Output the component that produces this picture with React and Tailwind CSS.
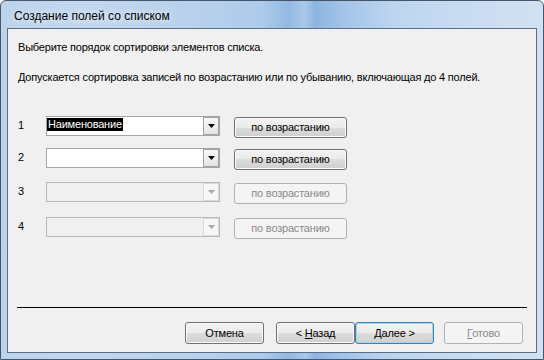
/**
 * Access combo box wizard — sort order step (Windows 7 dialog).
 */

const ui = "font-['Liberation_Sans',Tahoma,sans-serif] text-[11px] leading-[13px] tracking-[-0.2px]";

function Arrow({ disabled }) {
  return (
    <div className={`w-[16px] h-full flex items-center justify-center border ${disabled ? 'border-[#dadada] bg-[#f6f6f6]' : 'border-[#a3a3a3] bg-[linear-gradient(#f7f7f7,#e4e4e4)]'}`}>
      <svg width="7" height="4" viewBox="0 0 7 4"><path d="M0 0h7L3.5 4z" fill={disabled ? '#a8a8a8' : '#000'} /></svg>
    </div>
  );
}

function Combo({ value, disabled }) {
  return (
    <div className={`w-[174px] h-[20px] flex border ${disabled ? 'border-[#b8b8b8] bg-[#f0f0f0]' : 'border-[#a5a5a5] bg-white'}`}>
      <div className="flex-1 pt-px">
        {value && <span className="inline-block bg-black text-white px-px">{value}</span>}
      </div>
      <Arrow disabled={disabled} />
    </div>
  );
}

function Btn({ children, disabled, primary, w = 'w-[79px]', h = 'h-[22px]' }) {
  const look = disabled
    ? 'border-[#adb2b5] bg-[#f4f4f4] text-[#8a8a8a]'
    : primary
      ? 'border-[#3c7fb1] bg-[linear-gradient(#f2f2f2_0%,#ebebeb_50%,#dddddd_50%,#cfcfcf_100%)] shadow-[inset_0_0_0_1px_#9fd7f7] text-black'
      : 'border-[#707070] bg-[linear-gradient(#f2f2f2_0%,#ebebeb_50%,#dddddd_50%,#cfcfcf_100%)] shadow-[inset_0_0_0_1px_#fbfbfb] text-black';
  return (
    <div className={`${w} ${h} shrink-0 rounded-[3px] border flex items-center justify-center ${look}`}>
      <span className="whitespace-pre">{children}</span>
    </div>
  );
}

const rows = [
  { n: 1, mt: 'mt-[32px]', value: 'Наименование' },
  { n: 2, mt: 'mt-[10px]' },
  { n: 3, mt: 'mt-[12px]', disabled: true },
  { n: 4, mt: 'mt-[13px]', disabled: true },
];

export default function App() {
  return (
    <div className="w-[544px] h-[360px] overflow-hidden bg-white">
      <div className="w-full h-full rounded-t-[6px] border border-[#44566b] flex flex-col px-[6px] pb-[6px] bg-[linear-gradient(90deg,#bcd3ec_0%,#c3d8ef_15%,#b9d1ec_35%,#aecbea_48%,#94b9e2_53%,#a9c8e9_56%,#8db4e0_58%,#a3c3e8_63%,#bcd5ef_72%,#c8dcf1_85%,#d2e1f1_100%)]">
        <div className="h-[27px] pl-[7px] pt-[2px] flex items-center font-['Liberation_Sans',sans-serif] text-[12px] text-black [text-shadow:0_0_6px_#ffffff]">
          Создание полей со списком
        </div>
        <div className={`flex-1 border border-[#5b6f86] bg-[#f0f0f0] flex flex-col text-black ${ui}`}>
          <div className="pl-[10px] pt-[12px]">Выберите порядок сортировки элементов списка.</div>
          <div className="pl-[10px] mt-[17px]">Допускается сортировка записей по возрастанию или по убыванию, включающая до 4 полей.</div>

          {rows.map(r => (
            <div key={r.n} className={`flex items-start pl-[10px] h-[22px] ${r.mt}`}>
              <div className="w-[28px] pt-[3px]">{r.n}</div>
              <Combo value={r.value} disabled={r.disabled} />
              <div className="ml-[14px] mt-px">
                <Btn w="w-[113px]" h="h-[21px]" disabled={r.disabled}>по возрастанию</Btn>
              </div>
            </div>
          ))}

          <div className="mt-[68px] ml-[9px] w-[510px] h-px bg-black" />

          <div className="mt-[14px] flex justify-end pr-[13px]">
            <Btn>Отмена</Btn>
            <div className="ml-[12px]"><Btn>{'< '}<span className="underline">Н</span>азад</Btn></div>
            <Btn primary><span className="underline">Д</span>{'алее >'}</Btn>
            <div className="ml-[10px]"><Btn disabled><span className="underline">Г</span>отово</Btn></div>
          </div>
        </div>
      </div>
    </div>
  );
}
